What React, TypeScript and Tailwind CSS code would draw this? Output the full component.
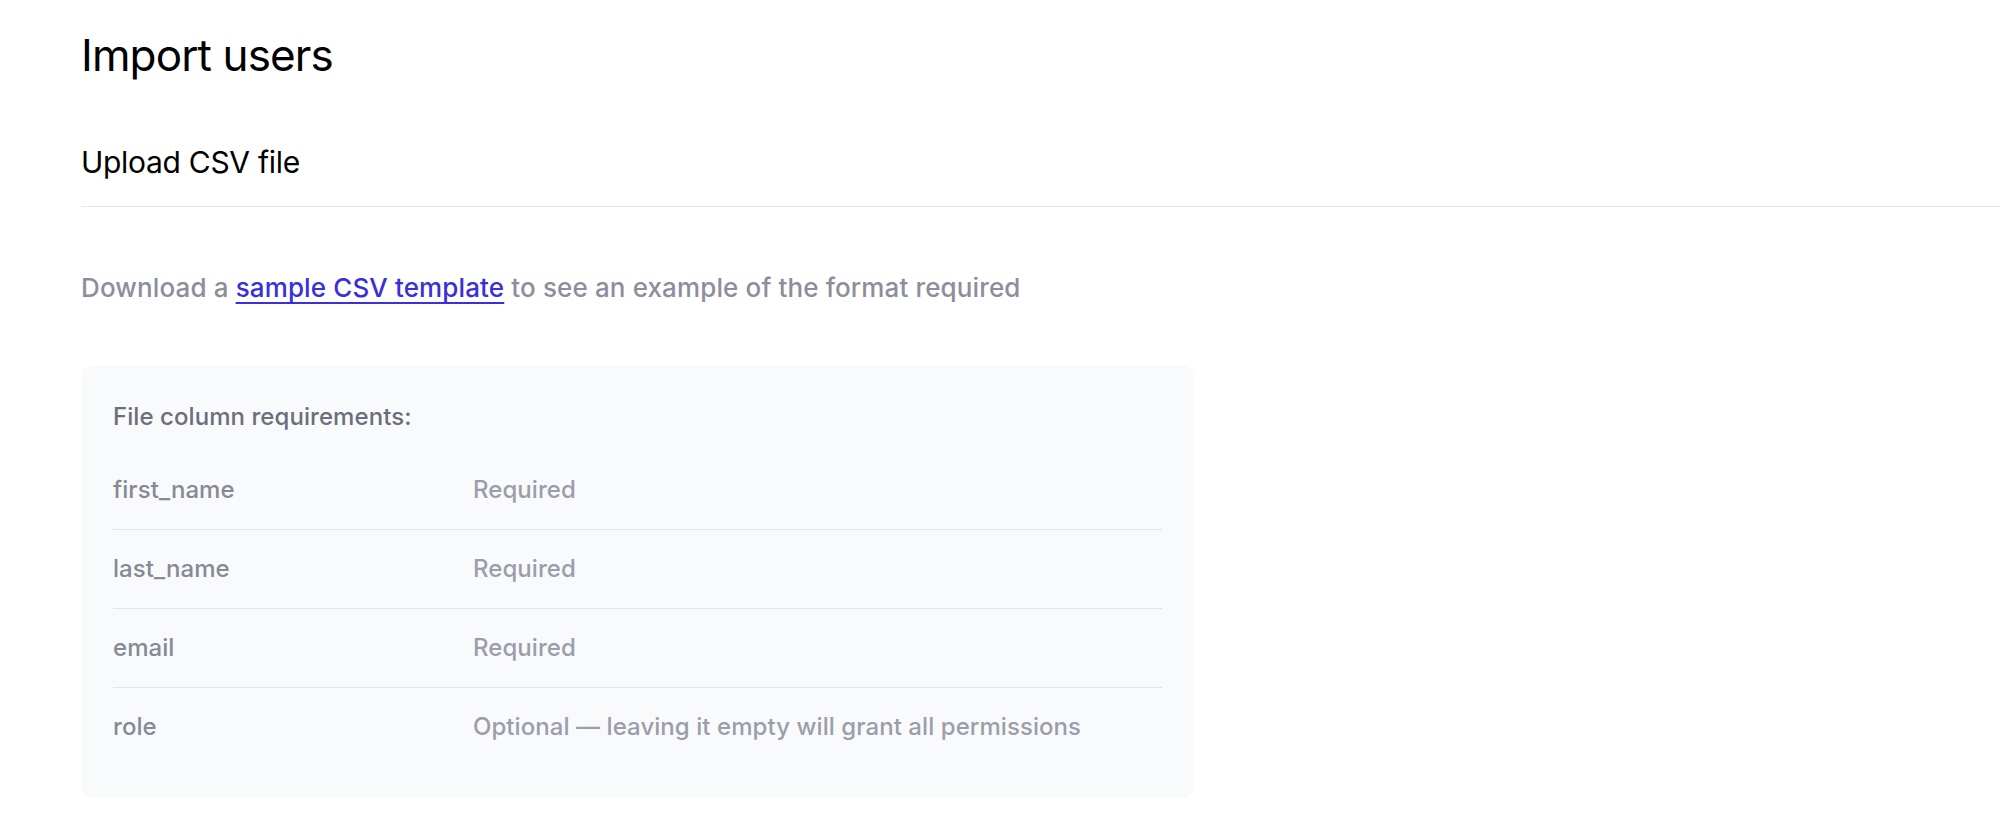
const columns = [
  { name: 'first_name', rule: 'Required' },
  { name: 'last_name', rule: 'Required' },
  { name: 'email', rule: 'Required' },
  { name: 'role', rule: 'Optional — leaving it empty will grant all permissions' },
]

export default function App() {
  return (
    <div className="min-h-screen bg-white pl-[81px] pt-[29px] font-['Inter',sans-serif]">
      <h1 className="text-[44px] leading-[53px] tracking-[-0.02em] text-black">Import users</h1>

      {/* Section header */}
      <div className="mt-[62px] border-b border-[#e6e7eb] pb-[26px]">
        <h2 className="text-[30px] leading-[36px] tracking-[-0.01em] text-black">Upload CSV file</h2>
      </div>

      <p className="mt-[65px] text-[26px] font-medium leading-[32px] tracking-[0.005em] text-[#8d8e9b]">
        Download a{' '}
        <a href="#" className="text-[#3a2fdc] underline underline-offset-[5px] decoration-[2px]">
          sample CSV template
        </a>{' '}
        to see an example of the format required
      </p>

      {/* Requirements card */}
      <div className="mt-[61px] w-[1113px] rounded-[12px] bg-[#f9fafb] p-[32px] font-medium tracking-[0.004em]">
        <div className="mb-[13px] text-[24px] leading-[40px] text-[#6b6f7d]">File column requirements:</div>
        {columns.map((col, i) => (
          <div
            key={col.name}
            className={`flex h-[79px] items-center text-[24px] ${i > 0 ? 'border-t border-[#e3e4e9]' : ''}`}
          >
            <div className="w-[360px] text-[#868996]">{col.name}</div>
            <div className="text-[#9b9eaa]">{col.rule}</div>
          </div>
        ))}
      </div>
    </div>
  )
}
